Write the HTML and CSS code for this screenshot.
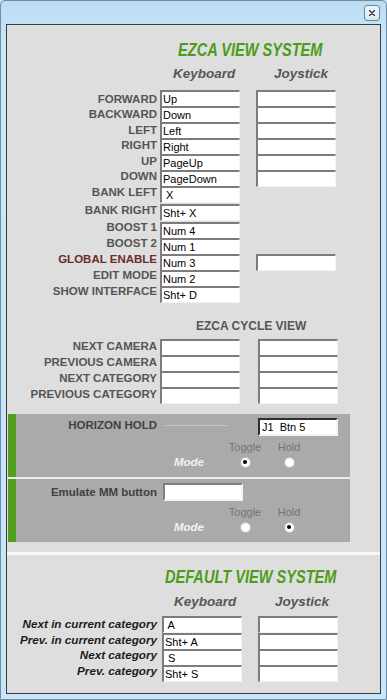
FILE: index.html
```html
<!DOCTYPE html>
<html>
<head>
<meta charset="utf-8">
<link rel="stylesheet" href="styles.css">
</head>
<body>
<div class="window">
  <div class="titlebar">
    <div class="close">
      <svg width="16" height="16" viewBox="0 0 16 16">
        <defs>
          <linearGradient id="cg" x1="0" y1="0" x2="0" y2="1">
            <stop offset="0" stop-color="#eef6fc"/>
            <stop offset="1" stop-color="#d2e6f3"/>
          </linearGradient>
        </defs>
        <rect x="0.5" y="0.5" width="15" height="15" rx="2.5" fill="url(#cg)" stroke="#6a879c"/>
        <path d="M5.5 5.5l5 5M10.5 5.5l-5 5" stroke="#ffffff" stroke-width="3.4" stroke-linecap="round"/>
        <path d="M5.5 5.5l5 5M10.5 5.5l-5 5" stroke="#333b42" stroke-width="1.5" stroke-linecap="round"/>
      </svg>
    </div>
  </div>
  <div class="panel">
    <div class="title t1"><span class="narrow">EZCA VIEW SYSTEM</span></div>
    <div class="heads h1"><span>Keyboard</span><span>Joystick</span></div>
    <div class="rows r1">
      <div class="row"><div class="lbl d1">FORWARD</div><div class="field">Up</div><div class="field joy"></div></div>
      <div class="row"><div class="lbl">BACKWARD</div><div class="field">Down</div><div class="field joy"></div></div>
      <div class="row"><div class="lbl">LEFT</div><div class="field">Left</div><div class="field joy"></div></div>
      <div class="row"><div class="lbl u1">RIGHT</div><div class="field">Right</div><div class="field joy"></div></div>
      <div class="row"><div class="lbl u1">UP</div><div class="field">PageUp</div><div class="field joy"></div></div>
      <div class="row"><div class="lbl u2">DOWN</div><div class="field">PageDown</div><div class="field joy"></div></div>
      <div class="row"><div class="lbl u2">BANK LEFT</div><div class="field"> X</div></div>
      <div class="row gap2"><div class="lbl u2">BANK RIGHT</div><div class="field">Sht+ X</div></div>
      <div class="row gap2"><div class="lbl u3">BOOST 1</div><div class="field">Num 4</div></div>
      <div class="row"><div class="lbl u3">BOOST 2</div><div class="field">Num 1</div></div>
      <div class="row"><div class="lbl u3 red">GLOBAL ENABLE</div><div class="field">Num 3</div><div class="field joy"></div></div>
      <div class="row"><div class="lbl u3">EDIT MODE</div><div class="field">Num 2</div></div>
      <div class="row"><div class="lbl u3">SHOW INTERFACE</div><div class="field">Sht+ D</div></div>
    </div>

    <div class="sub">EZCA CYCLE VIEW</div>
    <div class="rows r2">
      <div class="row"><div class="lbl u1">NEXT CAMERA</div><div class="field"></div><div class="field joy"></div></div>
      <div class="row"><div class="lbl u1">PREVIOUS CAMERA</div><div class="field"></div><div class="field joy"></div></div>
      <div class="row"><div class="lbl u1">NEXT CATEGORY</div><div class="field"></div><div class="field joy"></div></div>
      <div class="row"><div class="lbl u1">PREVIOUS CATEGORY</div><div class="field"></div><div class="field joy"></div></div>
    </div>

    <div class="opts">
      <div class="opt">
        <div class="otop">
          <div class="olabel">HORIZON HOLD</div>
          <div class="hline"></div>
          <div class="jfield">J1  Btn 5</div>
        </div>
        <div class="mhead"><span></span><span>Toggle</span><span>Hold</span></div>
        <div class="mrow"><span class="mode">Mode</span><span class="radio on"></span><span class="radio"></span></div>
      </div>
      <div class="opt">
        <div class="otop">
          <div class="olabel low">Emulate MM button</div>
          <div class="efield"></div>
        </div>
        <div class="mhead"><span></span><span>Toggle</span><span>Hold</span></div>
        <div class="mrow"><span class="mode">Mode</span><span class="radio"></span><span class="radio on"></span></div>
      </div>
    </div>

    <div class="sep"></div>

    <div class="title t2"><span class="narrow">DEFAULT VIEW SYSTEM</span></div>
    <div class="heads h2"><span>Keyboard</span><span>Joystick</span></div>
    <div class="rows r3">
      <div class="row"><div class="dlbl">Next in current category</div><div class="field"> A</div><div class="field joy"></div></div>
      <div class="row gap1"><div class="dlbl u1">Prev. in current category</div><div class="field">Sht+ A</div><div class="field joy"></div></div>
      <div class="row"><div class="dlbl u2">Next category</div><div class="field"> S</div><div class="field joy"></div></div>
      <div class="row"><div class="dlbl u2">Prev. category</div><div class="field">Sht+ S</div><div class="field joy"></div></div>
    </div>
  </div>
</div>
</body>
</html>
```

FILE: styles.css
```css
* { box-sizing: border-box; }

html, body {
  margin: 0;
  padding: 0;
  width: 387px;
  height: 700px;
  overflow: hidden;
  background: #c8e4f6;
  font-family: "Liberation Sans", Arial, sans-serif;
}

.window {
  width: 387px;
  height: 700px;
  border: 1px solid #6f8ea4;
  border-radius: 5px 5px 0 0;
  background: linear-gradient(#bcdcf1, #cae6f8 40px, #c9e5f7);
  padding: 0 5px 5px;
  display: flex;
  flex-direction: column;
}

.titlebar {
  height: 23px;
  display: flex;
  justify-content: flex-end;
  align-items: flex-start;
  flex: none;
}

.close {
  margin-top: 4px;
  margin-right: 1px;
  width: 16px;
  height: 16px;
}
.close svg { display: block; }

.panel {
  height: 670px;
  flex: none;
  border: 1px solid #343e48;
  background: #dedede;
  overflow: hidden;
  display: flex;
  flex-direction: column;
}

.title {
  font-weight: bold;
  font-style: italic;
  font-size: 18px;
  line-height: 20px;
  height: 20px;
  color: #4c9c19;
  white-space: nowrap;
}
.narrow {
  display: inline-block;
  transform: scaleX(0.81);
  transform-origin: left center;
}
.t1 { margin-top: 15px; padding-left: 171px; }
.t2 { margin-top: 12px; padding-left: 158px; }

.heads {
  display: grid;
  grid-template-columns: 101px auto;
  font-weight: bold;
  font-style: italic;
  font-size: 13.5px;
  line-height: 16px;
  height: 16px;
  color: #575757;
}
.h1 { margin-top: 6px; padding-left: 166px; }
.h2 { margin-top: 7px; padding-left: 167px; }

.rows { display: flex; flex-direction: column; }
.r1 { margin-top: 8px; }
.r2 { margin-top: 6px; }
.r3 { margin-top: 6px; }

.row {
  display: flex;
  align-items: flex-start;
  height: 16px;
}
.gap1 { margin-top: 1px; }
.gap2 { margin-top: 2px; }

.lbl {
  flex: none;
  width: 150px;
  margin-right: 3px;
  text-align: right;
  font-weight: bold;
  font-size: 11.5px;
  line-height: 16px;
  color: #555555;
  white-space: nowrap;
}
.red { color: #6f2a2a; }

.dlbl {
  flex: none;
  width: 150px;
  margin-right: 5px;
  text-align: right;
  font-weight: bold;
  font-style: italic;
  font-size: 11.7px;
  line-height: 16px;
  color: #1c1c1c;
  white-space: nowrap;
}

.d1 { margin-top: 1px; }
.u1 { margin-top: -1px; }
.u2 { margin-top: -2px; }
.u3 { margin-top: -3px; }

.field {
  flex: none;
  width: 80px;
  height: 17px;
  background: #ffffff;
  border-top: 2px solid #7c7c7c;
  border-left: 2px solid #7c7c7c;
  border-right: 1px solid #f3f3f3;
  border-bottom: 1px solid #f3f3f3;
  padding-left: 1px;
  font-size: 11px;
  line-height: 14px;
  color: #000;
  white-space: pre;
  overflow: hidden;
}
.field.joy { margin-left: 16px; }
.r2 .field.joy { margin-left: 18px; }

.sub {
  margin-top: 17px;
  padding-left: 189px;
  font-weight: bold;
  font-size: 12px;
  line-height: 14px;
  height: 14px;
  color: #555555;
}

.opts {
  margin-top: 11px;
  margin-left: 1px;
  width: 342px;
  display: flex;
  flex-direction: column;
  gap: 2px;
  background: #ececec;
}

.opt {
  height: 63px;
  background: #aaaaaa;
  border-left: 8px solid #52a01e;
}

.otop {
  display: flex;
  align-items: flex-start;
  padding-top: 4px;
  height: 22px;
}

.olabel {
  flex: none;
  width: 141px;
  text-align: right;
  font-weight: bold;
  font-size: 11.5px;
  line-height: 14px;
  color: #414141;
  white-space: nowrap;
}
.olabel.low { margin-top: 2px; }

.hline {
  flex: none;
  margin-left: 8px;
  margin-top: 7px;
  width: 63px;
  height: 1px;
  background: #c6c6c6;
}

.jfield, .efield {
  flex: none;
  width: 80px;
  height: 18px;
  background: #ffffff;
  font-size: 11px;
  line-height: 14px;
  color: #000;
  white-space: pre;
  padding-left: 2px;
}
.jfield {
  margin-left: 30px;
  border-top: 2px solid #2e2e2e;
  border-left: 2px solid #2e2e2e;
  border-right: 2px solid #f4f4f4;
  border-bottom: 2px solid #f4f4f4;
}
.efield {
  margin-left: 6px;
  border-top: 2px solid #808080;
  border-left: 2px solid #808080;
  border-right: 2px solid #f4f4f4;
  border-bottom: 2px solid #f4f4f4;
}

.mhead, .mrow {
  display: grid;
  grid-template-columns: 207px 44px 44px;
}

.mhead {
  margin-top: 5px;
  height: 12px;
  font-size: 11px;
  line-height: 12px;
  color: #747474;
  text-align: center;
}

.mrow {
  margin-top: 3px;
  height: 12px;
  align-items: center;
}
.mode {
  text-align: right;
  padding-right: 19px;
  font-weight: bold;
  font-style: italic;
  font-size: 11.5px;
  line-height: 12px;
  color: #f2f2f2;
}

.radio {
  justify-self: center;
  width: 11px;
  height: 11px;
  border-radius: 50%;
  background: radial-gradient(circle at 55% 55%, #ffffff 40%, #ececec 100%);
  border: 1px solid #c2c2c2;
  display: flex;
  align-items: center;
  justify-content: center;
}
.radio.on::after {
  content: "";
  width: 4px;
  height: 4px;
  border-radius: 50%;
  background: #000;
}

.sep {
  margin-top: 10px;
  height: 3px;
  background: #f9f9f9;
  flex: none;
}
```
